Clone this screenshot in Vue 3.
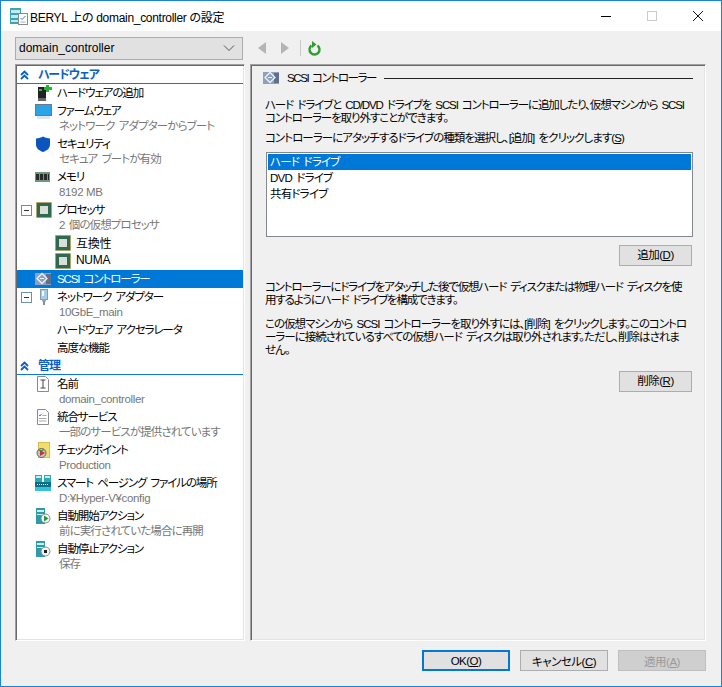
<script setup>
const items = [
  { group: true, name: 'ハードウェア' },
  { icon: 'add', name: 'ハードウェアの追加' },
  { icon: 'fw', name: 'ファームウェア', sub: 'ネットワーク アダプターからブート' },
  { icon: 'shield', name: 'セキュリティ', sub: 'セキュア ブートが有効' },
  { icon: 'mem', name: 'メモリ', sub: '8192 MB', lat: true },
  { icon: 'cpu', name: 'プロセッサ', sub: '2 個の仮想プロセッサ', tog: true },
  { icon: 'cpu', name: '互換性', nested: true },
  { icon: 'cpu', name: 'NUMA', nested: true },
  { icon: 'scsi', name: 'SCSI コントローラー', sel: true },
  { icon: 'nic', name: 'ネットワーク アダプター', sub: '10GbE_main', lat: true, tog: true },
  { icon: '', name: 'ハードウェア アクセラレータ' },
  { icon: '', name: '高度な機能' },
  { group: true, name: '管理' },
  { icon: 'name', name: '名前', sub: 'domain_controller', lat: true },
  { icon: 'svc', name: '統合サービス', sub: '一部のサービスが提供されています' },
  { icon: 'chk', name: 'チェックポイント', sub: 'Production', lat: true },
  { icon: 'page', name: 'スマート ページング ファイルの場所', sub: 'D:¥Hyper-V¥config', lat: true },
  { icon: 'start', name: '自動開始アクション', sub: '前に実行されていた場合に再開' },
  { icon: 'stop', name: '自動停止アクション', sub: '保存' },
]
</script>

<template>
  <div class="win">
    <header class="title">
      <svg class="appicon" width="18" height="18" viewBox="0 0 18 18">
        <rect x="0" y="1" width="11" height="16" fill="#3aa5b3" />
        <rect x="1" y="3" width="9" height="3" fill="#c4e9ee" />
        <rect x="1" y="8" width="9" height="3" fill="#c4e9ee" />
        <rect x="1" y="13" width="9" height="2" fill="#c4e9ee" />
        <rect x="8.500" y="6.500" width="9" height="11" fill="#fff" stroke="#8a8a8a" />
        <path d="M10.500 11l1.500 1.500L15.500 9" stroke="#3a7fd0" fill="none" />
        <path d="M10.500 15h5" stroke="#aaa" />
      </svg>
      <span class="title-text">BERYL 上の domain_controller の設定</span>
      <div class="caps">
        <svg width="46" height="30" viewBox="0 0 46 30"><path d="M18 15.500h10" stroke="#000" /></svg>
        <svg width="46" height="30" viewBox="0 0 46 30"><rect x="18.500" y="10.500" width="9" height="9" fill="none" stroke="#ccc" /></svg>
        <svg width="46" height="30" viewBox="0 0 46 30"><path d="M18 10l10 10M28 10l-10 10" stroke="#111" fill="none" /></svg>
      </div>
    </header>

    <div class="toolbar">
      <div class="combo">
        <span>domain_controller</span>
        <svg width="12" height="8" viewBox="0 0 12 8"><path d="M1 1.500l5 5 5-5" fill="none" stroke="#555" /></svg>
      </div>
      <div class="nav">
        <svg width="8" height="12" viewBox="0 0 8 12"><path d="M8 0v12L0 6z" fill="#b4b4b4" /></svg>
        <svg class="fwd" width="8" height="12" viewBox="0 0 8 12"><path d="M0 0v12l8-6z" fill="#b4b4b4" /></svg>
        <i class="sep"></i>
        <svg class="ref" width="13" height="15" viewBox="0 0 13 15">
          <path d="M3.500 4.500a5 5 0 1 0 6 0" fill="none" stroke="#2f9e2f" stroke-width="2.400" />
          <path d="M4 0v7l4.500-3.500z" fill="#2f9e2f" />
        </svg>
      </div>
    </div>

    <main class="body">
      <nav class="tree">
        <template v-for="it in items" :key="it.name">
          <div v-if="it.group" class="group">
            <svg width="9" height="10" viewBox="0 0 9 10"><path d="M1 5l3.500-3.500L8 5M1 9l3.500-3.500L8 9" fill="none" stroke="#0a5fc4" stroke-width="1.800" /></svg>
            <span>{{ it.name }}</span>
          </div>
          <template v-else>
            <div class="row" :class="{ sel: it.sel, nested: it.nested }">
              <span class="tog" :class="{ on: it.tog }"></span>
              <span class="ic">
                <svg v-if="it.icon === 'add'" width="18" height="18" viewBox="0 0 18 18">
                  <rect x="3" y="3" width="8" height="11" fill="#222" />
                  <rect x="4" y="5" width="3" height="2" fill="#2fbf3a" />
                  <rect x="3" y="14" width="8" height="3" fill="#666" />
                  <path d="M11 1h3v2h3v3h-3v2h-3V6H9V3h2z" fill="#23b534" />
                </svg>
                <svg v-else-if="it.icon === 'fw'" width="18" height="18" viewBox="0 0 18 18">
                  <rect x="0.500" y="2.500" width="16" height="11" fill="#2ba3e6" stroke="#6b7a88" />
                  <rect x="2" y="14" width="13" height="3" fill="#dfe7ec" />
                </svg>
                <svg v-else-if="it.icon === 'shield'" width="18" height="18" viewBox="0 0 18 18">
                  <path d="M8 1.500c2 1.200 4 1.800 7 2v6c0 3.800-3 6.200-7 7.500-4-1.300-7-3.700-7-7.500v-6c3-.2 5-.8 7-2z" fill="#0b55bd" />
                </svg>
                <svg v-else-if="it.icon === 'mem'" width="18" height="18" viewBox="0 0 18 18">
                  <rect x="0" y="4" width="15" height="10" fill="#6c9a78" />
                  <rect x="1" y="6" width="3" height="6" fill="#2a2a2a" /><rect x="5" y="6" width="3" height="6" fill="#2a2a2a" /><rect x="9" y="6" width="3" height="6" fill="#2a2a2a" /><rect x="13" y="6" width="1" height="6" fill="#2a2a2a" />
                </svg>
                <svg v-else-if="it.icon === 'cpu'" width="18" height="18" viewBox="0 0 18 18">
                  <rect x="1.500" y="1.500" width="15" height="15" fill="#2f6a50" stroke="#c9932e" stroke-dasharray="1 1" />
                  <rect x="3" y="3" width="12" height="12" fill="#2f6a50" />
                  <rect x="5" y="5" width="8" height="8" fill="#d9dedb" />
                </svg>
                <svg v-else-if="it.icon === 'scsi'" width="18" height="18" viewBox="0 0 18 18">
                  <rect x="0" y="3" width="16" height="12" fill="#8ea0bc" />
                  <rect x="11" y="4" width="5" height="10" fill="#5f708c" />
                  <path d="M7 3.500L2 8.500l5 5 5-5z" fill="#8ea0bc" stroke="#eef2f6" stroke-width="1.300" />
                  <path d="M5 8.500h4" stroke="#eef2f6" />
                </svg>
                <svg v-else-if="it.icon === 'nic'" width="18" height="18" viewBox="0 0 18 18">
                  <rect x="5.500" y="1.500" width="7" height="10" fill="#a5cbe9" stroke="#7f9cb8" />
                  <rect x="7" y="3" width="2" height="5" fill="#fff" />
                  <rect x="7" y="11.500" width="4" height="2" fill="#99a8b6" />
                  <rect x="8" y="13" width="2" height="4" fill="#7f8f9e" />
                </svg>
                <svg v-else-if="it.icon === 'name'" width="18" height="18" viewBox="0 0 18 18">
                  <path d="M2.500 1.500h8l3 3v12h-11z" fill="#fff" stroke="#8a8a8a" />
                  <path d="M5.500 5h5M5.500 13h5M8 5v8" stroke="#444" fill="none" />
                </svg>
                <svg v-else-if="it.icon === 'svc'" width="18" height="18" viewBox="0 0 18 18">
                  <path d="M2.500 1.500h8l3 3v12h-11z" fill="#fff" stroke="#8a8a8a" />
                  <path d="M4 7l1 1 1.500-2" stroke="#3a7fd0" fill="none" />
                  <path d="M7.500 7.500h4M4 10.500h7.500M4 13h7.500" stroke="#a8a8a8" />
                </svg>
                <svg v-else-if="it.icon === 'chk'" width="18" height="18" viewBox="0 0 18 18">
                  <rect x="3.500" y="1.500" width="11" height="15" fill="#f3dc70" stroke="#dcbc4c" />
                  <circle cx="6.500" cy="12" r="4.500" fill="#c4c4c4" stroke="#666" />
                  <path d="M5 9v6l5-3z" fill="#c8322e" />
                  <path d="M3 8.500l3 1.500 3-1.500" stroke="#2a8a2a" fill="none" />
                </svg>
                <svg v-else-if="it.icon === 'page'" width="18" height="18" viewBox="0 0 18 18">
                  <rect x="0" y="1" width="7" height="8" fill="#2aa9b8" />
                  <rect x="9" y="1" width="7" height="8" fill="#2aa9b8" />
                  <rect x="1" y="2" width="5" height="2" fill="#c4eef3" />
                  <rect x="10" y="2" width="5" height="2" fill="#c4eef3" />
                  <rect x="0" y="8" width="16" height="5" fill="#0d6f86" />
                  <path d="M2 10.500h12" stroke="#fff" stroke-dasharray="1 1" />
                  <rect x="0" y="13" width="16" height="4" fill="#36c2dc" />
                </svg>
                <svg v-else-if="it.icon === 'start' || it.icon === 'stop'" width="18" height="18" viewBox="0 0 18 18">
                  <rect x="1" y="1" width="9" height="16" fill="#2f9aa8" />
                  <rect x="2" y="3" width="7" height="2" fill="#cfeef2" />
                  <rect x="2" y="7" width="7" height="1" fill="#cfeef2" />
                  <circle cx="10.500" cy="11.500" r="4.500" fill="#f2f2f2" stroke="#8a8a8a" />
                  <path v-if="it.icon === 'start'" d="M9 8.500v6l4.500-3z" fill="#1a9a3a" />
                  <rect v-else x="9" y="10" width="3" height="3" fill="#222" />
                </svg>
              </span>
              <span class="label">{{ it.name }}</span>
            </div>
            <div v-if="it.sub" class="sub" :class="{ lat: it.lat }">{{ it.sub }}</div>
          </template>
        </template>
      </nav>

      <section class="panel">
        <div class="phead">
          <svg width="18" height="16" viewBox="0 0 18 16">
            <rect x="1" y="2" width="16" height="12" fill="#8ea0bc" />
            <rect x="12" y="3" width="5" height="10" fill="#5f708c" />
            <path d="M8 2.500L3 7.500l5 5 5-5z" fill="#8ea0bc" stroke="#eef2f6" stroke-width="1.300" />
            <path d="M6 7.500h4" stroke="#eef2f6" />
          </svg>
          <span>SCSI コントローラー</span>
          <i class="rule"></i>
        </div>
        <p class="p1">ハード ドライブと CD/DVD ドライブを SCSI コントローラーに追加したり、仮想マシンから SCSI<br>コントローラーを取り外すことができます。</p>
        <p class="p2">コントローラーにアタッチするドライブの種類を選択し、[追加] をクリックします(<u>S</u>)</p>
        <div class="list">
          <div class="li on">ハード ドライブ</div>
          <div class="li">DVD ドライブ</div>
          <div class="li">共有ドライブ</div>
        </div>
        <div class="act a1"><button class="btn sm">追加(<u>D</u>)</button></div>
        <p class="p3">コントローラーにドライブをアタッチした後で仮想ハード ディスクまたは物理ハード ディスクを使<br>用するようにハード ドライブを構成できます。</p>
        <p class="p4">この仮想マシンから SCSI コントローラーを取り外すには、[削除] をクリックします。このコントロ<br>ーラーに接続されているすべての仮想ハード ディスクは取り外されます。ただし、削除はされま<br>せん。</p>
        <div class="act a2"><button class="btn sm">削除(<u>R</u>)</button></div>
      </section>
    </main>

    <footer class="foot">
      <button class="btn lg def">OK(<u>O</u>)</button>
      <button class="btn lg">キャンセル(<u>C</u>)</button>
      <button class="btn lg dis">適用(<u>A</u>)</button>
    </footer>
  </div>
</template>

<style>
html, body { margin: 0; background: #f0f0f0; }
</style>

<style scoped>
* { box-sizing: border-box; }
.win {
  width: 722px; height: 687px; display: flex; flex-direction: column;
  border: 1px solid #1883d7; background: #f0f0f0; overflow: hidden;
  font: 12px "Liberation Sans", "Noto Sans CJK JP", sans-serif; color: #000;
  font-feature-settings: "palt"; word-spacing: 2px;
}
.title { height: 30px; background: #fff; display: flex; align-items: center; padding-left: 9px; flex: none; }
.appicon { margin-right: 2px; }
.title-text { letter-spacing: -0.3px; word-spacing: 0; }
.caps { margin-left: auto; display: flex; }
.caps svg { display: block; }
.toolbar { height: 33px; flex: none; display: flex; align-items: center; padding: 1px 0 0 14px; }
.combo {
  width: 228px; height: 23px; background: #e1e1e1; border: 1px solid #adadad;
  display: flex; align-items: center; justify-content: space-between; padding: 0 7px 0 3px;
}
.nav { display: flex; align-items: center; margin-left: 15px; }
.nav svg { display: block; }
.fwd { margin-left: 15px; }
.sep { width: 1px; height: 16px; background: #c8c8c8; margin-left: 11px; }
.ref { margin-left: 7px; }
.body { flex: none; height: 577px; display: flex; padding-left: 14px; }
.tree, .panel {
  height: 577px; border: 1px solid; border-color: #a0a0a0 #fff #fff #a0a0a0;
  box-shadow: inset 1px 1px 0 #696969, inset -1px -1px 0 #e3e3e3;
}
.tree { width: 230px; background: #fff; padding: 1px; }
.group { height: 18px; display: flex; align-items: center; color: #0a5fc4; font-weight: 700; border-bottom: 1px solid #0a78d7; padding-left: 3px; }
.group span { margin-left: 9px; line-height: 14px; letter-spacing: -1px; }
.row { height: 18px; display: flex; align-items: center; position: relative; }
.row.sel { background: #0078d7; color: #fff; }
.tog { width: 18px; flex: none; }
.tog.on::before { content: ""; position: absolute; left: 4px; top: 4px; width: 9px; height: 9px; border: 1px solid #6e8db0; background: linear-gradient(#333,#333) center/5px 1px no-repeat #fff; }
.ic { width: 21px; height: 18px; flex: none; display: flex; align-items: center; }
.ic svg { display: block; }
.label { margin-left: 1px; white-space: nowrap; font-size: 11.5px; letter-spacing: -1.1px; padding-bottom: 2px; }
.nested .ic { margin-left: 19px; }
.nested .label { font-size: 12px; letter-spacing: -0.3px; }
.sub { height: 15px; line-height: 13px; color: #777; padding-left: 42px; white-space: nowrap; font-size: 11.5px; letter-spacing: -0.9px; }
.sub.lat { letter-spacing: -0.35px; word-spacing: 0; }
.panel { width: 456px; margin-left: 5px; background: #f0f0f0; padding: 0 12px 0 15px; line-height: 13px; }
.phead { display: flex; align-items: center; height: 26px; margin-left: -4px; }
.phead span { margin-left: 7px; font-size: 11.5px; letter-spacing: -1.4px; }
.rule { flex: 1; height: 1px; background: #222; margin-left: 8px; }
p { margin: 0 0 0 -1px; white-space: nowrap; font-size: 11.5px; }
.p1 { margin-top: 8px; letter-spacing: -1.1px; }
.p2 { margin-top: 7px; letter-spacing: -0.95px; }
.p3 { margin-top: 15px; letter-spacing: -1.2px; }
.p4 { margin-top: 11px; letter-spacing: -1px; }
.list { height: 85px; background: #fff; border: 1px solid #828790; margin-top: 7px; padding: 1px; }
.li { height: 16px; line-height: 16px; padding-left: 2px; font-size: 11.5px; letter-spacing: -0.8px; }
.li.on { background: #0078d7; color: #fff; }
.act { display: flex; justify-content: flex-end; margin-right: 1px; }
.a1 { margin-top: 8px; }
.a2 { margin-top: 14px; }
.btn { font: inherit; font-size: 11.5px; letter-spacing: -0.5px; font-feature-settings: inherit; color: #000; background: #e1e1e1; border: 1px solid #adadad; padding: 0; display: block; }
.sm { width: 73px; height: 21px; }
.lg { width: 88px; height: 21px; }
.def { border: 2px solid #0078d7; }
.dis { background: #cfcfcf; border-color: #bfbfbf; color: #9a9a9a; }
.foot { flex: none; display: flex; justify-content: flex-end; gap: 10px; padding: 9px 15px 0 0; }
</style>
